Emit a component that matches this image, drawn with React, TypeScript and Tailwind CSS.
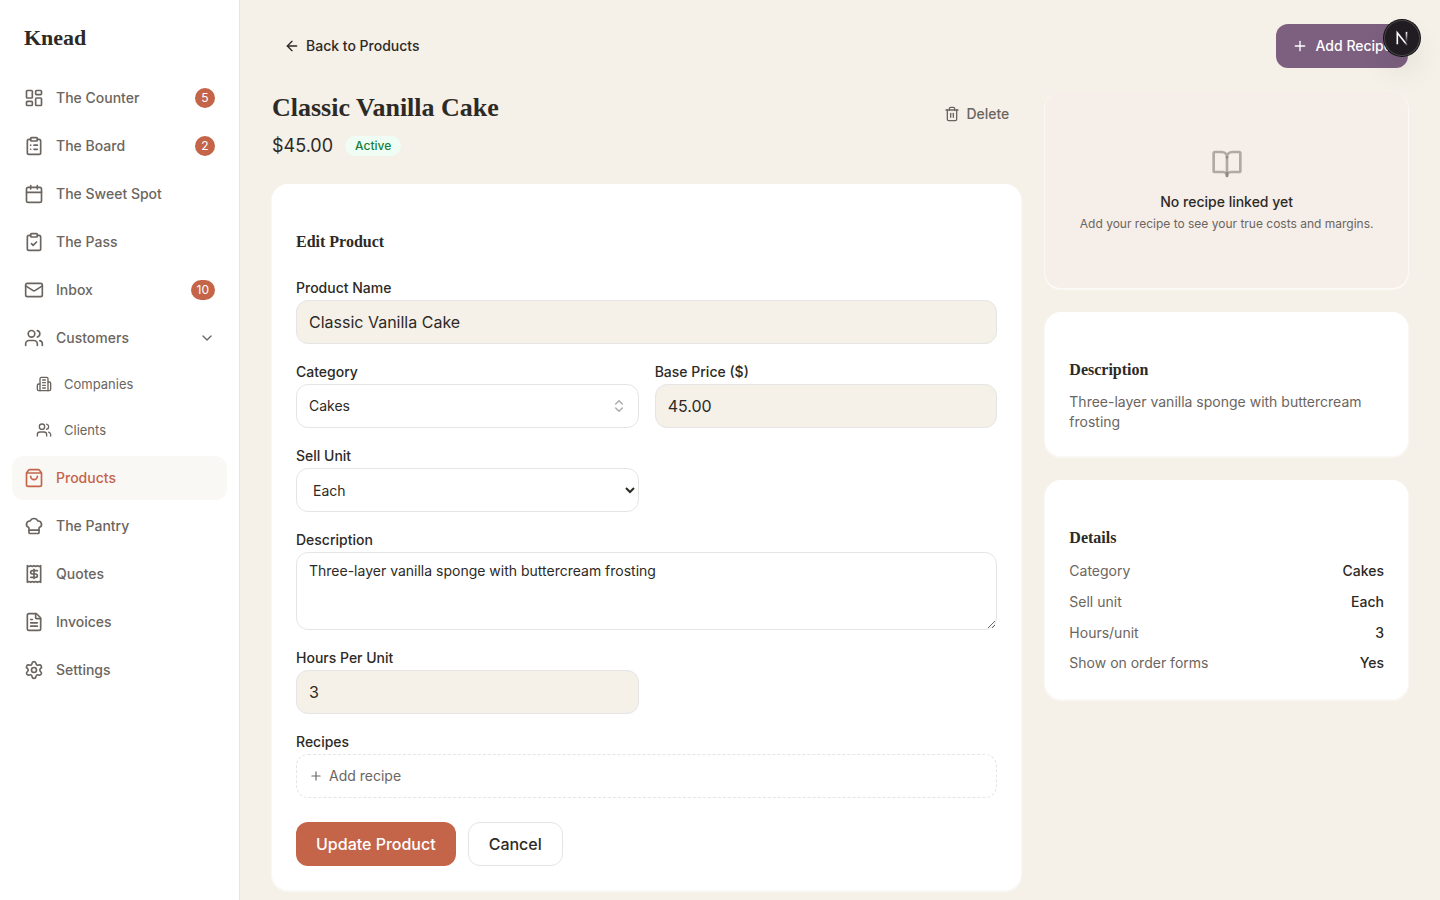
import { useState } from "react";
import {
  ArrowLeft,
  BookOpen,
  Calendar,
  ChefHat,
  ChevronDown,
  ChevronsUpDown,
  ClipboardCheck,
  ClipboardList,
  FileText,
  LayoutDashboard,
  Mail,
  Plus,
  Receipt,
  Settings,
  ShoppingBag,
  Trash2,
  Users,
} from "lucide-react";

interface IconProps {
  className?: string;
}

interface NavItem {
  label: string;
  icon: React.ComponentType<IconProps>;
  badge?: number;
  active?: boolean;
  children?: NavItem[];
}

const BuildingIcon = ({ className }: IconProps) => (
  <svg
    viewBox="0 0 24 24"
    fill="none"
    stroke="currentColor"
    strokeWidth="2"
    strokeLinecap="round"
    strokeLinejoin="round"
    className={className}
    aria-hidden="true"
  >
    <path d="M6 22V4a2 2 0 0 1 2-2h8a2 2 0 0 1 2 2v18Z" />
    <path d="M6 12H4a2 2 0 0 0-2 2v6a2 2 0 0 0 2 2h2" />
    <path d="M18 9h2a2 2 0 0 1 2 2v9a2 2 0 0 1-2 2h-2" />
    <path d="M10 6h4M10 10h4M10 14h4M10 18h4" />
  </svg>
);

const navItems: NavItem[] = [
  { label: "The Counter", icon: LayoutDashboard, badge: 5 },
  { label: "The Board", icon: ClipboardList, badge: 2 },
  { label: "The Sweet Spot", icon: Calendar },
  { label: "The Pass", icon: ClipboardCheck },
  { label: "Inbox", icon: Mail, badge: 10 },
  {
    label: "Customers",
    icon: Users,
    children: [
      { label: "Companies", icon: BuildingIcon },
      { label: "Clients", icon: Users },
    ],
  },
  { label: "Products", icon: ShoppingBag, active: true },
  { label: "The Pantry", icon: ChefHat },
  { label: "Quotes", icon: Receipt },
  { label: "Invoices", icon: FileText },
  { label: "Settings", icon: Settings },
];

const inputClass =
  "block h-11 w-full rounded-xl border border-[#e5e5e5] bg-[#f5f0e8] px-3 text-base";
const labelClass = "block text-sm leading-6 font-medium";
const serifClass = "font-['Liberation_Serif',serif] font-bold";

const NavGroup = ({ item }: { item: NavItem }) => {
  const [open, setOpen] = useState(true);
  const Icon = item.icon;
  return (
    <li>
      <button
        type="button"
        aria-expanded={open}
        onClick={() => setOpen(!open)}
        className="flex h-11 w-full items-center gap-3 rounded-xl px-3 font-medium cursor-pointer"
      >
        <Icon className="size-5 shrink-0" />
        <span className="flex-1 text-left">{item.label}</span>
        <ChevronDown className="size-4" />
      </button>
      {open && (
        <ul className="mt-0.5 flex flex-col gap-0.5 pl-3">
          {item.children?.map((child) => (
            <li key={child.label}>
              <a
                href="#"
                className="flex h-11 items-center gap-3 rounded-xl px-3 text-[13px]"
              >
                <child.icon className="size-4 shrink-0" />
                {child.label}
              </a>
            </li>
          ))}
        </ul>
      )}
    </li>
  );
};

const Sidebar = () => (
  <aside className="sticky top-0 h-screen w-60 shrink-0 border-r border-[#e5e5e5] bg-white px-3 text-sm text-[#6b6560]">
    <div
      className={`${serifClass} px-3 pt-6 pb-6 text-[22px] leading-7 text-[#2d2a26]`}
    >
      Knead
    </div>
    <nav>
      <ul className="flex flex-col gap-1">
        {navItems.map((item) =>
          item.children ? (
            <NavGroup key={item.label} item={item} />
          ) : (
            <li key={item.label}>
              <a
                href="#"
                className={`flex h-11 items-center gap-3 rounded-xl px-3 font-medium ${
                  item.active ? "bg-[#faf8f5] text-[#c4654a]" : ""
                }`}
              >
                <item.icon className="size-5 shrink-0" />
                <span className="flex-1">{item.label}</span>
                {item.badge && (
                  <span className="flex h-5 min-w-5 items-center justify-center rounded-full bg-[#c4654a] px-1.5 text-xs font-normal text-white">
                    {item.badge}
                  </span>
                )}
              </a>
            </li>
          ),
        )}
      </ul>
    </nav>
  </aside>
);

const Card = ({
  title,
  children,
}: {
  title: string;
  children: React.ReactNode;
}) => (
  <section className="rounded-2xl bg-white px-6 pt-12 pb-6 shadow-[0_1px_1px_1px_#fbf9f5]">
    <h2 className={`${serifClass} text-base leading-5`}>{title}</h2>
    {children}
  </section>
);

const ProductForm = () => (
  <Card title="Edit Product">
    <form className="mt-6" onSubmit={(e) => e.preventDefault()}>
      <div className="flex flex-col gap-4">
        <div>
          <label htmlFor="name" className={labelClass}>
            Product Name
          </label>
          <input
            id="name"
            defaultValue="Classic Vanilla Cake"
            className={inputClass}
          />
        </div>
        <div className="grid grid-cols-2 gap-4">
          <div>
            <label htmlFor="category" className={labelClass}>
              Category
            </label>
            <div className="relative">
              <select
                id="category"
                className="block h-11 w-full appearance-none rounded-xl border border-[#e5e5e5] bg-white px-3 text-sm"
              >
                <option>Cakes</option>
              </select>
              <ChevronsUpDown className="pointer-events-none absolute top-3.5 right-3 size-4 opacity-40" />
            </div>
          </div>
          <div>
            <label htmlFor="price" className={labelClass}>
              Base Price ($)
            </label>
            <input id="price" defaultValue="45.00" className={inputClass} />
          </div>
          <div>
            <label htmlFor="unit" className={labelClass}>
              Sell Unit
            </label>
            <select
              id="unit"
              className="block h-11 w-full rounded-xl border border-[#e5e5e5] bg-white px-3 text-sm"
            >
              <option>Each</option>
            </select>
          </div>
        </div>
        <div>
          <label htmlFor="description" className={labelClass}>
            Description
          </label>
          <textarea
            id="description"
            rows={3}
            defaultValue="Three-layer vanilla sponge with buttercream frosting"
            className="block w-full rounded-xl border border-[#e5e5e5] bg-white px-3 py-2 text-sm"
          />
        </div>
        <div className="grid grid-cols-2 gap-4">
          <div>
            <label htmlFor="hours" className={labelClass}>
              Hours Per Unit
            </label>
            <input id="hours" defaultValue="3" className={inputClass} />
          </div>
        </div>
        <div>
          <p className={labelClass}>Recipes</p>
          <button
            type="button"
            className="flex h-11 w-full items-center gap-1.5 rounded-xl border border-dashed border-[#e5e5e5] px-3 text-sm text-[#6b6560] cursor-pointer"
          >
            <Plus className="size-3.5" />
            Add recipe
          </button>
        </div>
      </div>
      <div className="mt-6 flex gap-3">
        <button
          type="submit"
          className="h-11 rounded-xl bg-[#c4654a] px-5 text-base font-medium text-white cursor-pointer"
        >
          Update Product
        </button>
        <button
          type="button"
          className="h-11 rounded-xl border border-[#e5e5e5] bg-white px-5 text-base font-medium cursor-pointer"
        >
          Cancel
        </button>
      </div>
    </form>
  </Card>
);

const details = [
  { label: "Category", value: "Cakes" },
  { label: "Sell unit", value: "Each" },
  { label: "Hours/unit", value: "3" },
  { label: "Show on order forms", value: "Yes" },
];

const DevBadge = () => (
  <div className="fixed top-5 right-5 flex size-9 items-center justify-center rounded-full bg-[#211c22] shadow-[0_0_0_1px_#111,inset_0_0_0_1px_#444,0_16px_32px_-8px_rgba(0,0,0,0.24)]">
    <svg viewBox="0 0 40 40" className="size-9" fill="none" aria-hidden="true">
      <defs>
        <linearGradient id="diag" x1="18" y1="18" x2="27" y2="28" gradientUnits="userSpaceOnUse">
          <stop offset="0.6" stopColor="#fff" />
          <stop offset="1" stopColor="#fff" stopOpacity="0" />
        </linearGradient>
        <linearGradient id="stem" x1="25" y1="13" x2="25" y2="25" gradientUnits="userSpaceOnUse">
          <stop stopColor="#fff" />
          <stop offset="1" stopColor="#fff" stopOpacity="0" />
        </linearGradient>
      </defs>
      <path d="M14.8 27V14.2L25.8 28" stroke="url(#diag)" strokeWidth="1.8" />
      <path d="M25 13.2V25" stroke="url(#stem)" strokeWidth="1.8" />
    </svg>
  </div>
);

const App = () => {
  return (
    <div className="flex min-h-screen bg-[#f5f0e8] font-[Inter,sans-serif] text-[#2d2a26]">
      <Sidebar />
      <main className="min-w-0 flex-1 px-8 py-6">
        <div className="flex items-center justify-between text-sm font-medium">
          <a href="#" className="flex h-11 items-center gap-1.5 px-3">
            <ArrowLeft className="size-4" />
            Back to Products
          </a>
          <button
            type="button"
            className="flex h-11 items-center gap-2 rounded-xl bg-[#7d6080] px-4 text-white cursor-pointer"
          >
            <Plus className="size-4" />
            Add Recipe
          </button>
        </div>

        <div className="mt-6 grid grid-cols-3 items-start gap-6">
          <div className="col-span-2">
            <div className="mb-6 flex items-start justify-between">
              <div>
                <h1 className={`${serifClass} text-[26px] leading-8`}>
                  Classic Vanilla Cake
                </h1>
                <div className="mt-2 flex items-center gap-3">
                  <span className="text-lg leading-7">$45.00</span>
                  <span className="flex h-5 items-center rounded-full bg-[#f0fdf4] px-2.5 text-xs font-medium text-[#15803d]">
                    Active
                  </span>
                </div>
              </div>
              <button
                type="button"
                className="flex h-11 items-center gap-1.5 px-3 text-sm font-medium text-[#6b6560] cursor-pointer"
              >
                <Trash2 className="size-4" />
                Delete
              </button>
            </div>
            <ProductForm />
          </div>

          <div className="flex flex-col gap-6">
            <section className="flex flex-col items-center rounded-2xl bg-[#f6eee8] px-6 py-14 text-center shadow-[0_1px_1px_1px_#fcfaf7]">
              <BookOpen className="mb-3 size-8 text-[#6b6560]/50" />
              <p className="mb-1 text-sm font-medium">No recipe linked yet</p>
              <p className="text-xs text-[#6b6560]">
                Add your recipe to see your true costs and margins.
              </p>
            </section>
            <Card title="Description">
              <p className="mt-3 text-sm text-[#6b6560]">
                Three-layer vanilla sponge with buttercream frosting
              </p>
            </Card>
            <Card title="Details">
              <dl className="mt-3 flex flex-col gap-2 text-sm leading-relaxed">
                {details.map((row) => (
                  <div key={row.label} className="flex justify-between">
                    <dt className="text-[#6b6560]">{row.label}</dt>
                    <dd className="font-medium">{row.value}</dd>
                  </div>
                ))}
              </dl>
            </Card>
          </div>
        </div>
      </main>
      <DevBadge />
    </div>
  );
};

export default App;
